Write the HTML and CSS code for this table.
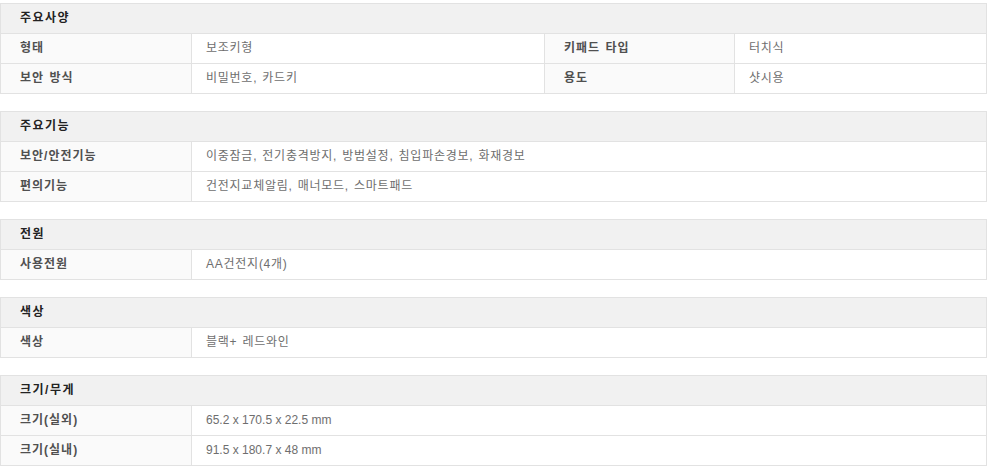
FILE: index.html
```html
<!DOCTYPE html>
<html lang="ko">
<head>
<meta charset="utf-8">
<link rel="stylesheet" href="styles.css">
</head>
<body>
<div class="specs">
  <table class="spec">
    <colgroup><col class="c1"><col class="c2"><col class="c3"><col class="c4"></colgroup>
    <tr><th class="head" colspan="4">주요사양</th></tr>
    <tr><th>형태</th><td>보조키형</td><th>키패드 타입</th><td>터치식</td></tr>
    <tr><th>보안 방식</th><td>비밀번호, 카드키</td><th>용도</th><td>샷시용</td></tr>
  </table>
  <table class="spec">
    <colgroup><col class="c1"><col class="c2"><col class="c3"><col class="c4"></colgroup>
    <tr><th class="head" colspan="4">주요기능</th></tr>
    <tr><th>보안/안전기능</th><td colspan="3">이중잠금, 전기충격방지, 방범설정, 침입파손경보, 화재경보</td></tr>
    <tr><th>편의기능</th><td colspan="3">건전지교체알림, 매너모드, 스마트패드</td></tr>
  </table>
  <table class="spec">
    <colgroup><col class="c1"><col class="c2"><col class="c3"><col class="c4"></colgroup>
    <tr><th class="head" colspan="4">전원</th></tr>
    <tr><th>사용전원</th><td colspan="3">AA건전지(4개)</td></tr>
  </table>
  <table class="spec">
    <colgroup><col class="c1"><col class="c2"><col class="c3"><col class="c4"></colgroup>
    <tr><th class="head" colspan="4">색상</th></tr>
    <tr><th>색상</th><td colspan="3">블랙+ 레드와인</td></tr>
  </table>
  <table class="spec">
    <colgroup><col class="c1"><col class="c2"><col class="c3"><col class="c4"></colgroup>
    <tr><th class="head" colspan="4">크기/무게</th></tr>
    <tr><th>크기(실외)</th><td class="num" colspan="3">65.2 x 170.5 x 22.5 mm</td></tr>
    <tr><th>크기(실내)</th><td class="num" colspan="3">91.5 x 180.7 x 48 mm</td></tr>
  </table>
</div>
</body>
</html>
```

FILE: styles.css
```css
html, body {
  margin: 0;
  padding: 0;
  background: #ffffff;
}
body {
  font-family: "Liberation Sans", "Noto Sans CJK KR", sans-serif;
  font-size: 12px;
}
.specs {
  width: 986px;
  padding-top: 3px;
  display: flex;
  flex-direction: column;
  gap: 17px;
}
.spec {
  width: 986px;
  border-collapse: collapse;
  table-layout: fixed;
  border: 1px solid #e2e2e2;
}
.c1 { width: 191px; }
.c2 { width: 353px; }
.c3 { width: 190px; }
.c4 { width: 252px; }
.spec th, .spec td {
  box-sizing: border-box;
  height: 30px;
  padding: 0 0 2px 19px;
  border: 1px solid #e2e2e2;
  text-align: left;
  vertical-align: middle;
  line-height: 16px;
  white-space: nowrap;
  letter-spacing: 0.75px;
  word-spacing: 1px;
}
.spec th {
  background: #fafafa;
  color: #505050;
  font-weight: bold;
  letter-spacing: 1px;
}
.spec td {
  background: #ffffff;
  color: #6e6e6e;
  font-weight: normal;
  padding-left: 14px;
}
.spec td.num {
  letter-spacing: 0;
  word-spacing: 0;
}
.spec th.head {
  background: #f1f1f1;
  color: #222222;
  letter-spacing: 1.5px;
}
```
